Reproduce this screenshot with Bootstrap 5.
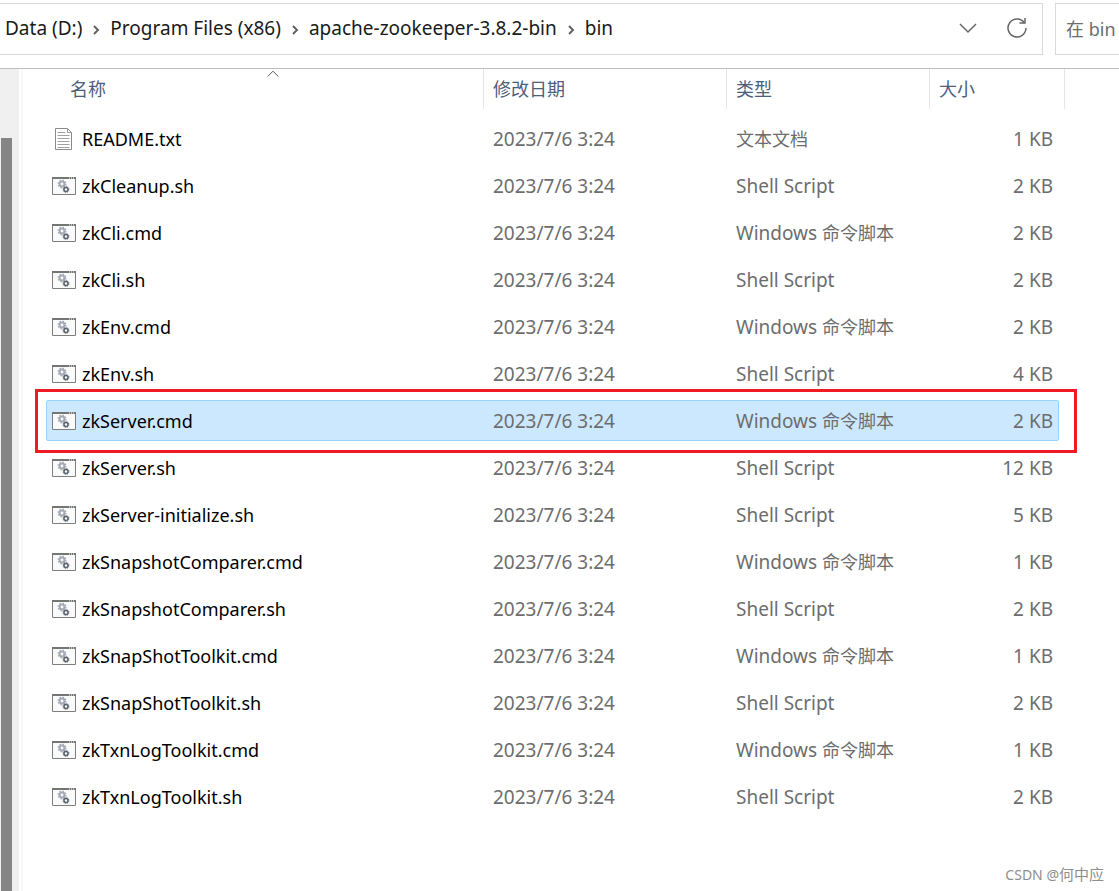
<!DOCTYPE html>
<html lang="zh-CN">
<head>
<meta charset="utf-8">
<meta name="viewport" content="width=device-width, initial-scale=1">
<title>bin</title>
<link href="https://cdn.jsdelivr.net/npm/bootstrap@5.3.0/dist/css/bootstrap.min.css" rel="stylesheet">
<style>
body { font: 19px/24px "Noto Sans", "Noto Sans CJK SC", sans-serif; color: #000; background: #fff; }
.toolbar { padding-top: 3px; padding-bottom: 13px; gap: 12px; border-bottom: 1px solid #bfbfbf; }
.address { height: 52px; border: 1px solid #d9d9d9; border-left: 0; padding-left: 5px; padding-right: 13px; padding-bottom: 2px; }
.crumbs a { color: #1a1a1a; text-decoration: none; }
.crumbs svg { width: 28px; height: 12px; margin-top: 4px; }
.tool { width: 24px; height: 24px; }
.search { width: 64px; height: 52px; border: 1px solid #d9d9d9; border-right: 0; padding: 0 0 0 10px; color: #6d6d6d; outline: 0; background: #fff; font-size: 18px; }
.search::placeholder { color: #6d6d6d; opacity: 1; }
.side { width: 19px; background: #f0f0f0; padding: 69px 7px 0 1px; }
.thumb { background: #858585; }
.divider { width: 2px; margin-left: 2px; background: #f7f7f7; }
.listing { padding-left: 23px; padding-right: 54px; min-height: 822px; }
.files { table-layout: fixed; width: 100%; color: #6d6d6d; }
.files th { height: 46px; padding: 0; font-weight: 400; vertical-align: top; }
.files th div { height: 40px; padding: 8px 0 0 9px; border-right: 1px solid #e5e5e5; color: #4c607a; font-size: 18px; }
.files th:first-child div { padding-left: 24px; }
.files th svg { top: 1px; left: 221px; }
.files td { height: 47px; padding: 0 9px; white-space: nowrap; }
.files td:first-child { padding-left: 6px; color: #000; font-size: 18px; }
.files td:last-child { padding-right: 12px; text-align: right; }
.files td svg { width: 24px; height: 24px; margin-right: 6px; vertical-align: -5px; }
.files .zh { font-size: 18px; }
.c-date { width: 243px; } .c-type { width: 203px; } .c-size { width: 135px; }
.picked { position: relative; z-index: 0; }
.picked td:first-child::before { content: ""; position: absolute; inset: 3px 6px 3px 0; background: #cce8ff; border: 1px solid #99d1ff; border-radius: 2px; z-index: -1; }
.picked td:first-child::after { content: ""; position: absolute; inset: -8px -12px -9px -11px; border: 3px solid #ed1c24; pointer-events: none; }
.credit { right: 15px; bottom: 4px; font-size: 14px; color: #8e8e8e; }
.credit .zh { font-size: 15px; }
</style>
</head>
<body>
<svg class="d-none" xmlns="http://www.w3.org/2000/svg">
  <symbol id="sep" viewBox="0 0 28 12"><path d="M12 2l4 4-4 4" fill="none" stroke="#5f5f5f" stroke-width="1.900"/></symbol>
  <symbol id="txt" viewBox="0 0 24 24">
    <path d="M3.500 1.500h12l4 4v17h-16z" fill="#fff" stroke="#8b8b8b"/><path d="M15.500 1.500v4h4" fill="none" stroke="#9a9a9a"/>
    <path d="M5.500 5.500h8M5.500 8.500h12M5.500 11.500h12M5.500 14.500h12M5.500 17.500h12M5.500 20.500h12" stroke="#a0a0a0"/>
  </symbol>
  <symbol id="cmd" viewBox="0 0 24 24">
    <path d="M.5 4h23v16.500h-23z" fill="#fafafa" stroke="#7c7f7c"/><path d="M0 4h24" stroke="#737673" stroke-width="2"/>
    <path d="M17 4h1M19 4h1M21 4h1" stroke="#fff" stroke-width="1"/>
    <circle cx="10" cy="10" r="2.400" fill="none" stroke="#a3abb5" stroke-width="2"/>
    <circle cx="10" cy="10" r="3.800" fill="none" stroke="#a3abb5" stroke-width="1.400" stroke-dasharray="1.500 1.480"/>
    <circle cx="14" cy="15.500" r="2" fill="none" stroke="#59636c" stroke-width="1.500"/>
    <circle cx="14" cy="15.500" r="2.900" fill="none" stroke="#59636c" stroke-width="1" stroke-dasharray="1.200 1.080"/>
  </symbol>
</svg>
<header class="toolbar d-flex">
  <div class="address d-flex align-items-center flex-grow-1">
    <nav class="crumbs d-flex align-items-center text-nowrap flex-grow-1" aria-label="路径">
      <a href="#">Data (D:)</a><svg aria-hidden="true"><use href="#sep"/></svg><a href="#">Program Files (x86)</a><svg aria-hidden="true"><use href="#sep"/></svg><a href="#">apache-zookeeper-3.8.2-bin</a><svg aria-hidden="true"><use href="#sep"/></svg><a href="#">bin</a>
    </nav>
    <button class="btn border-0 p-0 d-flex tool" aria-label="历史"><svg width="24" height="24" viewBox="0 0 24 24"><path d="M3 8l8 8 8-8" fill="none" stroke="#666" stroke-width="1.500"/></svg></button>
    <button class="btn border-0 p-0 d-flex tool ms-4" aria-label="刷新"><svg width="24" height="24" viewBox="0 0 24 24"><path d="M19.500 7A9 9 0 1 0 21 12" fill="none" stroke="#666" stroke-width="1.500"/><path d="M20 2v5h-5.500" fill="none" stroke="#666" stroke-width="1.500"/></svg></button>
  </div>
  <input class="search rounded-0" type="text" placeholder="在 bin 中搜索" aria-label="搜索">
</header>
<main class="d-flex position-relative">
  <div class="side d-flex flex-shrink-0"><div class="thumb flex-grow-1"></div></div>
  <div class="divider flex-shrink-0"></div>
  <div class="listing flex-grow-1">
    <table class="files">
      <colgroup><col><col class="c-date"><col class="c-type"><col class="c-size"></colgroup>
      <thead><tr>
        <th scope="col"><div class="position-relative">名称<svg class="position-absolute" width="12" height="8" viewBox="0 0 12 8" aria-hidden="true"><path d="M.7 6.500L6 1.200l5.300 5.300" fill="none" stroke="#555"/></svg></div></th>
        <th scope="col"><div>修改日期</div></th><th scope="col"><div>类型</div></th><th scope="col"><div>大小</div></th>
      </tr></thead>
      <tbody>
        <tr><td><svg><use href="#txt"/></svg>README.txt</td><td>2023/7/6 3:24</td><td><span class="zh">文本文档</span></td><td>1 KB</td></tr>
        <tr><td><svg><use href="#cmd"/></svg>zkCleanup.sh</td><td>2023/7/6 3:24</td><td>Shell Script</td><td>2 KB</td></tr>
        <tr><td><svg><use href="#cmd"/></svg>zkCli.cmd</td><td>2023/7/6 3:24</td><td>Windows <span class="zh">命令脚本</span></td><td>2 KB</td></tr>
        <tr><td><svg><use href="#cmd"/></svg>zkCli.sh</td><td>2023/7/6 3:24</td><td>Shell Script</td><td>2 KB</td></tr>
        <tr><td><svg><use href="#cmd"/></svg>zkEnv.cmd</td><td>2023/7/6 3:24</td><td>Windows <span class="zh">命令脚本</span></td><td>2 KB</td></tr>
        <tr><td><svg><use href="#cmd"/></svg>zkEnv.sh</td><td>2023/7/6 3:24</td><td>Shell Script</td><td>4 KB</td></tr>
        <tr class="picked"><td><svg><use href="#cmd"/></svg>zkServer.cmd</td><td>2023/7/6 3:24</td><td>Windows <span class="zh">命令脚本</span></td><td>2 KB</td></tr>
        <tr><td><svg><use href="#cmd"/></svg>zkServer.sh</td><td>2023/7/6 3:24</td><td>Shell Script</td><td>12 KB</td></tr>
        <tr><td><svg><use href="#cmd"/></svg>zkServer-initialize.sh</td><td>2023/7/6 3:24</td><td>Shell Script</td><td>5 KB</td></tr>
        <tr><td><svg><use href="#cmd"/></svg>zkSnapshotComparer.cmd</td><td>2023/7/6 3:24</td><td>Windows <span class="zh">命令脚本</span></td><td>1 KB</td></tr>
        <tr><td><svg><use href="#cmd"/></svg>zkSnapshotComparer.sh</td><td>2023/7/6 3:24</td><td>Shell Script</td><td>2 KB</td></tr>
        <tr><td><svg><use href="#cmd"/></svg>zkSnapShotToolkit.cmd</td><td>2023/7/6 3:24</td><td>Windows <span class="zh">命令脚本</span></td><td>1 KB</td></tr>
        <tr><td><svg><use href="#cmd"/></svg>zkSnapShotToolkit.sh</td><td>2023/7/6 3:24</td><td>Shell Script</td><td>2 KB</td></tr>
        <tr><td><svg><use href="#cmd"/></svg>zkTxnLogToolkit.cmd</td><td>2023/7/6 3:24</td><td>Windows <span class="zh">命令脚本</span></td><td>1 KB</td></tr>
        <tr><td><svg><use href="#cmd"/></svg>zkTxnLogToolkit.sh</td><td>2023/7/6 3:24</td><td>Shell Script</td><td>2 KB</td></tr>
      </tbody>
    </table>
  </div>
  <div class="credit position-absolute">CSDN @<span class="zh">何中应</span></div>
</main>
<script src="https://cdn.jsdelivr.net/npm/bootstrap@5.3.0/dist/js/bootstrap.bundle.min.js"></script>
</body>
</html>
